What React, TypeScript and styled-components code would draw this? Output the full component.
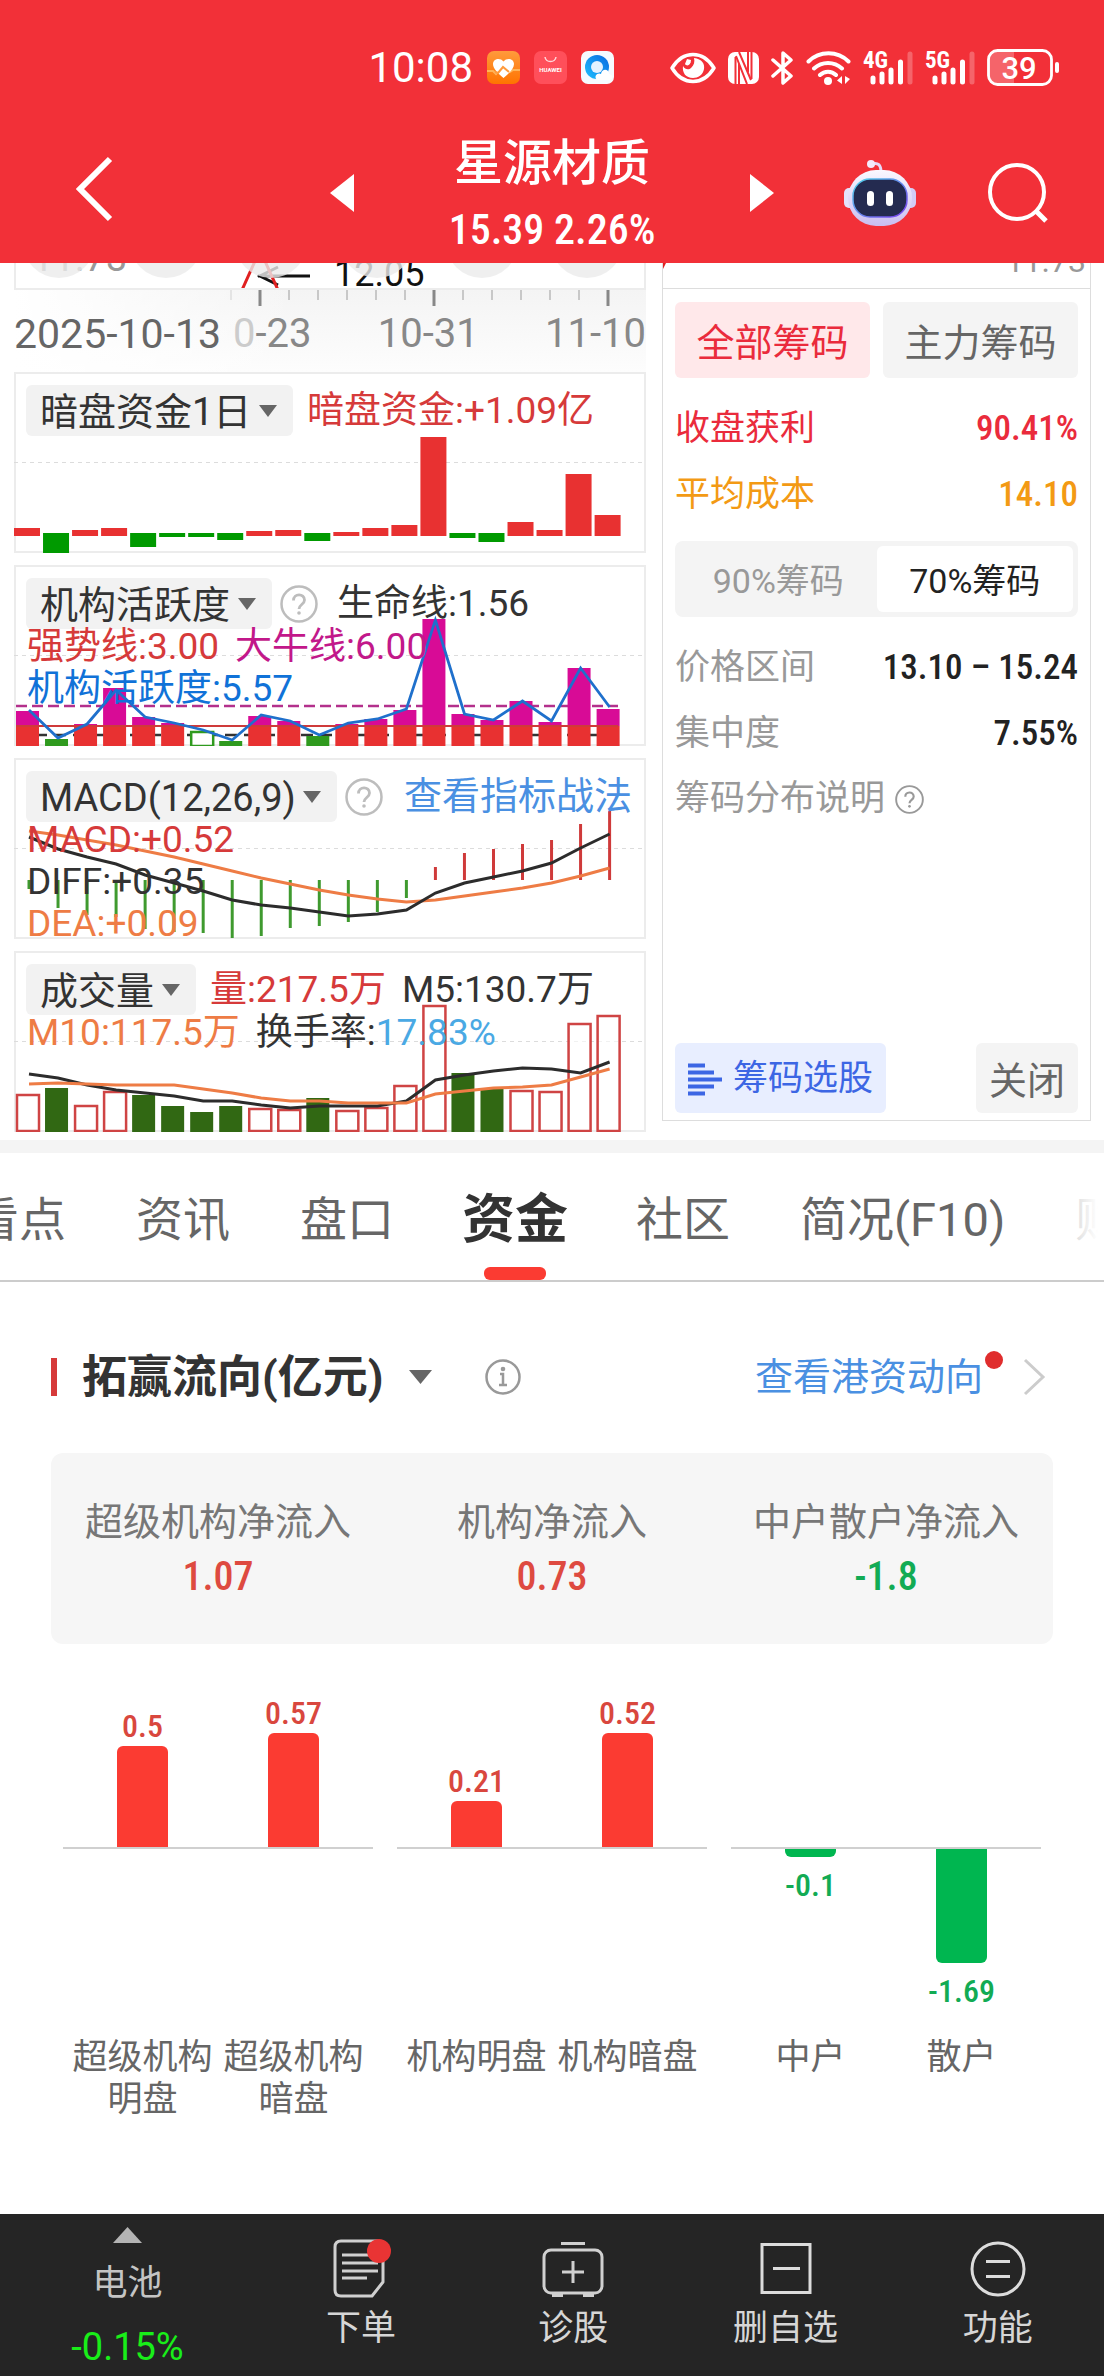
import React, { useState } from "react";
import styled, { createGlobalStyle, css } from "styled-components";

const sans = `Roboto, "Noto Sans CJK SC", sans-serif`;
const condensed = `"Roboto Condensed", Roboto, "Noto Sans CJK SC", sans-serif`;

const color = {
  brand: "#f23038",
  rise: "#fb3b32",
  fall: "#00b650",
  red: "#d63a3a",
  ink: "#333333",
  text: "#666666",
  muted: "#999999",
  link: "#4a90e2",
  line: "#cccccc",
  frame: "#ececec",
  soft: "#f4f4f4",
};

const GlobalStyle = createGlobalStyle`
  *, *::before, *::after { box-sizing: border-box; }
  body {
    margin: 0;
    background: #fff;
    color: ${color.ink};
    font-family: ${sans};
    font-size: 38px;
  }
  button, select {
    margin: 0;
    padding: 0;
    border: 0;
    background: none;
    color: inherit;
    font: inherit;
    appearance: none;
    white-space: nowrap;
  }
  a { color: inherit; text-decoration: none; }
  svg { display: block; flex: none; }
`;

const Page = styled.div`
  display: flex;
  flex-direction: column;
  min-height: 100vh;
  overflow: hidden;
`;

/* ---------- header ---------- */

const Header = styled.header`
  background: ${color.brand};
  color: #fff;
  padding: 49px 0 9px;
`;

const StatusBar = styled.div`
  display: flex;
  align-items: center;
  justify-content: flex-end;
  gap: 56px;
  height: 37px;
  padding-right: 44px;
`;

const StatusGroup = styled.div<{ $gap: number }>`
  display: flex;
  align-items: center;
  gap: ${(p) => p.$gap}px;
`;

const Clock = styled.time`
  font-size: 42px;
  line-height: 37px;
`;

const NavBar = styled.nav`
  display: grid;
  grid-template-columns: 1fr minmax(0, 444px) 1fr;
  align-items: center;
  padding: 0 56px 0 76px;
  margin-top: 46px;
`;

const NavMiddle = styled.div`
  display: flex;
  align-items: center;
  justify-content: space-between;
  margin: 0 10px 0 -10px;
`;

const NavActions = styled.div`
  display: flex;
  align-items: center;
  justify-content: flex-end;
  gap: 71px;
`;

const StockTitle = styled.div`
  text-align: center;
  white-space: nowrap;
`;

const StockName = styled.h1`
  margin: 0;
  font-size: 49px;
  line-height: 64px;
  font-weight: 500;
`;

const StockPrice = styled.div`
  margin-top: 10px;
  font-family: ${condensed};
  font-size: 42px;
  line-height: 48px;
  font-weight: 500;
`;

/* ---------- market area ---------- */

const Market = styled.section`
  display: grid;
  grid-template-columns: minmax(0, 632fr) minmax(0, 429fr);
  column-gap: 16px;
  padding: 0 13px 8px 14px;
`;

const ChartColumn = styled.div`
  display: flex;
  flex-direction: column;
`;

const PriceTail = styled.div`
  height: 27px;
  border: solid ${color.frame};
  border-width: 0 2px 2px;
  overflow: hidden;
`;

const DateAxis = styled.div`
  height: 82px;
  background: linear-gradient(90deg, #fff, rgba(255, 255, 255, 0) 45%),
    linear-gradient(180deg, #f4f4f4, #fdfdfd);
`;

const Ticks = styled.svg`
  width: 100%;
  height: 17px;
`;

const Dates = styled.div`
  display: flex;
  justify-content: space-between;
  margin-top: 6px;
  font-size: 40px;
  line-height: 42px;
  color: #888;
  white-space: nowrap;
`;

const DatePair = styled.span`
  display: flex;
  gap: 12px;
`;

const FirstDate = styled.span`
  font-size: 41px;
  color: ${color.text};
`;

const Faded = styled.span`
  color: #ccc;
`;

const Panel = styled.section`
  position: relative;
  height: 181px;
  border: 2px solid ${color.frame};
  padding: 11px 0 0 10px;
  & + & {
    margin-top: 12px;
  }
`;

const PanelChart = styled.svg`
  position: absolute;
  inset: -2px;
  width: calc(100% + 4px);
  height: 181px;
`;

const PanelText = styled.div`
  position: relative;
`;

const PanelHead = styled.div`
  display: flex;
  align-items: center;
  height: 51px;
  white-space: nowrap;
`;

const Legend = styled.span<{ $color?: string }>`
  color: ${(p) => p.$color || color.ink};
`;

const LegendLine = styled.div`
  display: flex;
  gap: 16px;
  height: 42px;
  line-height: 42px;
  font-size: 37px;
  padding-left: 1px;
  white-space: nowrap;
`;

const LegendRows = styled.div`
  margin-top: -3px;
`;

const HeadLegends = styled.div`
  display: flex;
  gap: 16px;
  margin-left: 14px;
  font-size: 37px;
  line-height: 51px;
`;

const Picker = styled.label`
  display: flex;
  align-items: center;
  gap: 7px;
  height: 51px;
  padding: 0 16px 0 14px;
  border-radius: 6px;
  background: #f2f2f2;
  color: ${color.ink};
  select {
    line-height: 48px;
    height: 51px;
    padding-top: 3px;
  }
`;

const HelpButton = styled.button`
  display: flex;
  margin: 0 5px 0 8px;
`;

const IndicatorLink = styled.a`
  margin-left: 16px;
  line-height: 51px;
  color: ${color.link};
`;

/* ---------- chip distribution ---------- */

const ChipColumn = styled.aside`
  display: flex;
  flex-direction: column;
  margin-bottom: 11px;
  border: 1px solid #dddddd;
  border-top: 0;
`;

const ChipTail = styled.div`
  display: flex;
  justify-content: space-between;
  align-items: flex-end;
  height: 26px;
  padding-right: 4px;
  overflow: hidden;
  border-bottom: 1px solid #dddddd;
  color: ${color.muted};
  font-size: 32px;
  line-height: 34px;
`;

const ChipTailValue = styled.span`
  margin-bottom: 10px;
`;

const ChipBody = styled.div`
  display: flex;
  flex: 1;
  flex-direction: column;
  padding: 13px 12px 7px;
`;

const ChipTabs = styled.div`
  display: grid;
  grid-template-columns: 1fr 1fr;
  gap: 13px;
`;

const ChipTab = styled.button<{ $on: boolean }>`
  height: 76px;
  padding-bottom: 2px;
  border-radius: 6px;
  background: ${(p) => (p.$on ? "#ffe8ea" : color.soft)};
  color: ${(p) => (p.$on ? "#ea2b3c" : color.text)};
`;

const Facts = styled.dl`
  margin: 16px 0 0;
`;

const Fact = styled.div<{ $color?: string }>`
  display: flex;
  align-items: center;
  justify-content: space-between;
  height: 66px;
  padding-top: 3px;
  font-size: 35px;
  line-height: 48px;
  color: ${(p) => p.$color || color.muted};
  white-space: nowrap;
  dt, dd { margin: 0; }
  dd {
    font-family: ${condensed};
    font-weight: 500;
    color: ${(p) => p.$color || "#222"};
  }
`;

const Segment = styled.div`
  display: grid;
  grid-template-columns: 1fr 1fr;
  margin-top: 15px;
  padding: 5px;
  border-radius: 8px;
  background: ${color.soft};
`;

const SegmentItem = styled.button<{ $on: boolean }>`
  height: 66px;
  padding-bottom: 2px;
  border-radius: 6px;
  font-size: 34px;
  background: ${(p) => (p.$on ? "#fff" : "transparent")};
  color: ${(p) => (p.$on ? "#222" : color.muted)};
`;

const Explain = styled.button`
  display: flex;
  align-items: center;
  gap: 10px;
  height: 66px;
  padding-top: 2px;
  font-size: 35px;
  line-height: 48px;
  color: ${color.muted};
`;

const ChipFooter = styled.div`
  display: flex;
  justify-content: space-between;
  margin-top: auto;
`;

const PickStocks = styled.button`
  display: flex;
  align-items: center;
  gap: 11px;
  height: 70px;
  padding: 2px 13px 0;
  border-radius: 6px;
  background: #e8eeff;
  color: #3c66e4;
  font-size: 35px;
  line-height: 48px;
`;

const CloseButton = styled.button`
  height: 70px;
  padding: 0 13px 2px;
  border-radius: 6px;
  background: ${color.soft};
  color: ${color.text};
`;

/* ---------- tabs ---------- */

const TabBar = styled.div`
  position: relative;
  border-top: 13px solid ${color.soft};
  border-bottom: 2px solid ${color.line};
  overflow: hidden;
  &::after {
    content: "";
    position: absolute;
    inset: 0 0 0 auto;
    width: 60px;
    background: linear-gradient(90deg, rgba(255, 255, 255, 0.5), #fff 90%);
  }
`;

const TabStrip = styled.div`
  display: flex;
  margin-left: -63px;
`;

const Tab = styled.button<{ $on: boolean }>`
  position: relative;
  flex: none;
  height: 127px;
  padding: 0 ${(p) => (p.$on ? 33 : 35)}px 3px;
  font-size: ${(p) => (p.$on ? 53 : 47)}px;
  font-weight: ${(p) => (p.$on ? 700 : 400)};
  color: ${(p) => (p.$on ? color.ink : color.text)};
  ${(p) =>
    p.$on &&
    css`
      &::after {
        content: "";
        position: absolute;
        left: calc(50% - 31px);
        bottom: 0;
        width: 62px;
        height: 13px;
        border-radius: 6px;
        background: ${color.rise};
      }
    `}
`;

/* ---------- fund flow ---------- */

const Flow = styled.main`
  flex: 1;
  padding: 62px 51px 0;
`;

const FlowHead = styled.div`
  display: flex;
  align-items: center;
  height: 66px;
`;

const Marker = styled.span`
  width: 6px;
  height: 38px;
  background: ${color.red};
`;

const FlowPicker = styled.label`
  display: flex;
  align-items: center;
  gap: 25px;
  margin-left: 25px;
  select {
    height: 66px;
    font-size: 45px;
    font-weight: 700;
  }
`;

const InfoButton = styled.button`
  display: flex;
  margin-left: 52px;
`;

const FlowLink = styled.a`
  display: flex;
  align-items: center;
  gap: 39px;
  margin: 0 7px 0 auto;
  line-height: 48px;
  color: ${color.link};
`;

const LinkText = styled.span`
  position: relative;
  white-space: nowrap;
  &::after {
    content: "";
    position: absolute;
    right: -20px;
    top: -2px;
    width: 18px;
    height: 18px;
    border-radius: 50%;
    background: #e02d2d;
  }
`;

const Summary = styled.dl`
  display: grid;
  grid-template-columns: repeat(3, 1fr);
  margin: 43px 0 0;
  padding: 41px 0;
  border-radius: 12px;
  background: #f6f6f6;
  text-align: center;
  white-space: nowrap;
`;

const SummaryLabel = styled.dt`
  line-height: 56px;
  color: #777;
`;

const SummaryValue = styled.dd<{ $down: boolean }>`
  margin: 0;
  font-family: ${condensed};
  font-size: 40px;
  line-height: 53px;
  font-weight: 500;
  color: ${(p) => (p.$down ? "#12ab54" : "#de4a40")};
`;

const FlowChart = styled.div`
  display: grid;
  grid-template-columns: repeat(3, 1fr);
  gap: 24px;
  padding: 49px 12px 90px;
`;

const FlowGroup = styled.div`
  display: grid;
  grid-template-columns: 1fr 1fr;
  padding: 0 4px;
  background: linear-gradient(#d0d0d0, #d0d0d0) 0 154px / 100% 2px no-repeat;
`;

const FlowItem = styled.div`
  display: flex;
  flex-direction: column;
  align-items: center;
`;

const Above = styled.div`
  display: flex;
  flex-direction: column;
  align-items: center;
  justify-content: flex-end;
  height: 156px;
  padding-bottom: 2px;
`;

const Below = styled.div`
  display: flex;
  flex-direction: column;
  align-items: center;
  height: 188px;
`;

const Bar = styled.div<{ $down: boolean }>`
  width: 51px;
  border-radius: ${(p) => (p.$down ? "0 0 6px 6px" : "6px 6px 0 0")};
  background: ${(p) => (p.$down ? color.fall : color.rise)};
`;

const BarValue = styled.span<{ $down: boolean }>`
  font-family: ${condensed};
  font-size: 32px;
  font-weight: 500;
  line-height: 40px;
  margin-top: ${(p) => (p.$down ? 8 : 0)}px;
  color: ${(p) => (p.$down ? "#12ab54" : "#d9473e")};
`;

const BarLabel = styled.span`
  width: 144px;
  font-size: 35px;
  line-height: 42px;
  text-align: center;
  color: ${color.text};
`;

/* ---------- bottom bar ---------- */

const BottomBar = styled.nav`
  display: flex;
  height: 162px;
  background: #252525;
  color: #d6d6d6;
  font-size: 35px;
`;

const BottomItem = styled.button`
  display: flex;
  flex: 1;
  flex-direction: column;
  align-items: center;
  padding-top: 24px;
  line-height: 46px;
`;

const BottomLabel = styled.span`
  margin-top: 6px;
`;

const Sector = styled.button`
  display: flex;
  flex: 0 0 255px;
  flex-direction: column;
  align-items: center;
  padding-top: 13px;
  color: #c4c4c4;
`;

const SectorName = styled.span`
  margin-top: 16px;
  line-height: 50px;
`;

const SectorChange = styled.span`
  margin-top: 16px;
  font-size: 38px;
  line-height: 44px;
  color: #19ee19;
`;

/* ---------- icons ---------- */

const Caret = ({ w = 18, h = 12 }: { w?: number; h?: number }) => (
  <svg width={w} height={h} viewBox="0 0 18 12" preserveAspectRatio="none" aria-hidden="true">
    <path d="M0 0h18L9 12z" fill="#666" />
  </svg>
);

const QuestionIcon = ({ size = 38, tone = "#bdbdbd" }: { size?: number; tone?: string }) => (
  <svg width={size} height={size} viewBox="0 0 38 38" fill="none" stroke={tone} aria-hidden="true">
    <circle cx="19" cy="19" r="17.5" strokeWidth="2.5" />
    <path d="M13.5 15.5c0-7.500 11-7.500 11-.5 0 4.500-5.500 4.500-5.500 9" strokeWidth="2.800" />
    <circle cx="19" cy="28" r="1.800" fill={tone} stroke="none" />
  </svg>
);

const HealthApp = () => (
  <svg width="33" height="33" viewBox="0 0 33 33" aria-hidden="true">
    <defs>
      <linearGradient id="health" x1="0" y1="0" x2="0" y2="1">
        <stop offset="0" stopColor="#ff9a3c" />
        <stop offset="1" stopColor="#ff7300" />
      </linearGradient>
    </defs>
    <rect width="33" height="33" rx="7" fill="url(#health)" />
    <path d="M0 20h6l3 3 8-9 6 7 3-2h7" fill="none" stroke="#ffb458" strokeWidth="2" />
    <path d="M16.500 27C11 22 6 18 6 13c0-5 7-7 10.500-2.500C20 6 27 8 27 13c0 5-5 9-10.500 14z" fill="#fff" />
    <path d="M8 21l3 1 5-6 6 5" fill="none" stroke="#ff9a3c" strokeWidth="2" />
  </svg>
);

const StoreApp = () => (
  <svg width="33" height="33" viewBox="0 0 33 33" aria-hidden="true">
    <rect width="33" height="33" rx="7" fill="#ff4f5a" />
    <path d="M11 6c1 6 10 6 11 0" fill="none" stroke="#ffd5d8" strokeWidth="1.500" />
    <text x="16.500" y="21" textAnchor="middle" fontSize="6" fontWeight="700" fill="#fff">HUAWEI</text>
  </svg>
);

const BrowserApp = () => (
  <svg width="33" height="33" viewBox="0 0 33 33" aria-hidden="true">
    <defs>
      <linearGradient id="browser" x1="0" y1="1" x2="1" y2="0">
        <stop offset="0" stopColor="#1fc0ff" />
        <stop offset="1" stopColor="#0a68e0" />
      </linearGradient>
    </defs>
    <rect width="33" height="33" rx="7" fill="#f6faff" />
    <circle cx="16" cy="16" r="12" fill="url(#browser)" />
    <circle cx="16" cy="16" r="6" fill="#e6f2ff" />
    <path d="M16 29c-4-4 1-8 4-6 1-6 8-5 8 0 5 1 4 6 0 6z" fill="#fff" />
  </svg>
);

const EyeIcon = () => (
  <svg width="46" height="32" viewBox="0 0 46 32" aria-hidden="true">
    <path d="M2 16C13-2 33-2 44 16 33 34 13 34 2 16z" fill="none" stroke="#fff" strokeWidth="3.500" strokeLinejoin="round" />
    <path d="M24 6c8 1 11 6 10 11-1 6-6 9-11 9-7 0-11-5-10-12 2 4 6 4 8 2 3-3 4-6 3-10z" fill="#fff" />
    <path d="M15 12c2 3 6 1 6-4l-4-1z" fill="#fff" />
  </svg>
);

const NfcIcon = () => (
  <svg width="31" height="32" viewBox="0 0 31 32" aria-hidden="true">
    <rect width="31" height="32" rx="7" fill="#fff" />
    <path d="M7.500 32V5M23.500 0v27" fill="none" stroke={color.brand} strokeWidth="2" />
    <path d="M11 12v20M20 0v20M11 0l12 28M8 4l11 28" fill="none" stroke={color.brand} strokeWidth="2" />
  </svg>
);

const BluetoothIcon = () => (
  <svg width="23" height="34" viewBox="0 0 23 34" fill="none" stroke="#fff" strokeWidth="3.500" strokeLinejoin="round" strokeLinecap="round" aria-hidden="true">
    <path d="M2 9l18 16-8 7V2l8 7L2 25" />
  </svg>
);

const WifiIcon = () => (
  <svg width="45" height="34" viewBox="0 0 45 34" fill="none" stroke="#fff" strokeWidth="4" strokeLinecap="round" aria-hidden="true">
    <path d="M2.500 10.500c11-11 29-11 40 0M8 17.500c8-7.500 20-7.500 28 0M14 24c4.500-4.500 11.500-4.500 16 0" />
    <circle cx="22" cy="30" r="4" fill="#fff" stroke="none" />
    <path d="M36 25v8l-5-3.500zM39 33v-8l5 3z" fill="#fff" stroke="none" />
  </svg>
);

const SignalText = styled.text`
  font-family: ${condensed};
  font-size: 23px;
  font-weight: 700;
  fill: #fff;
`;

const SignalIcon = ({ label }: { label: string }) => (
  <svg width="50" height="34" viewBox="0 0 50 34" aria-hidden="true">
    <SignalText x="0" y="17">{label}</SignalText>
    <g stroke="#fff" strokeWidth="5" strokeLinecap="round">
      <path d="M10 27v4M19 23v8M28 19v12M37.500 11v20" />
      <path d="M47 3v28" opacity="0.25" />
    </g>
  </svg>
);

const BatteryIcon = () => (
  <svg width="73" height="37" viewBox="0 0 73 37" aria-hidden="true">
    <path d="M8 2h19v33H8a6 6 0 0 1-6-6V8a6 6 0 0 1 6-6z" fill="#fff" opacity="0.25" />
    <rect x="1.500" y="1.500" width="63" height="34" rx="9" fill="none" stroke="#fff" strokeWidth="2.800" />
    <rect x="68" y="13" width="4" height="11" rx="2" fill="#fff" />
    <text x="32" y="29.500" textAnchor="middle" fontSize="31" fontWeight="500" fill="#fff">39</text>
  </svg>
);

const RobotIcon = () => (
  <svg width="74" height="68" viewBox="0 0 74 68" aria-hidden="true">
    <defs>
      <linearGradient id="shell" x1="0" y1="0" x2="0" y2="1">
        <stop offset="0" stopColor="#fbf8ff" />
        <stop offset="1" stopColor="#c9bdf0" />
      </linearGradient>
      <linearGradient id="rim" x1="0" y1="0" x2="1" y2="1">
        <stop offset="0" stopColor="#52d5ea" />
        <stop offset="1" stopColor="#7a3cf0" />
      </linearGradient>
    </defs>
    <path d="M29 5c6-2 9 1 9 8" fill="none" stroke="#e6d9f8" strokeWidth="3" />
    <circle cx="28" cy="5" r="4" fill="#f4e9fb" />
    <rect x="1" y="29" width="12" height="20" rx="5" fill="#e4e2fb" />
    <rect x="61" y="29" width="12" height="20" rx="5" fill="#d3ccf6" />
    <rect x="5" y="11" width="64" height="56" rx="28" fill="url(#shell)" />
    <rect x="10" y="20" width="54" height="38" rx="17" fill="#242b50" stroke="url(#rim)" strokeWidth="1.500" />
    <rect x="24" y="32" width="7" height="15" rx="3.500" fill="#fff" />
    <rect x="43" y="32" width="7" height="15" rx="3.500" fill="#fff" />
  </svg>
);

/* ---------- chart data ---------- */

const STEP = 29.03;
const left = (i: number) => 2 + STEP * i;
const mid = (i: number) => 15 + STEP * i;
const line = (ys: number[]) => ys.map((y, i) => `${mid(i).toFixed(1)},${y}`).join(" ");

const darkFlow = [8, -20, 6, 8, -14, -4, -4, -7, 5, 6, -8, 4, 8, 11, 99, -5, -9, 14, 6, 62, 21];

const activityBars = [146, 174, 159, 123, 152, 158, 166, 176, 151, 156, 171, 159, 154, 145, 54, 149, 155, 136, 157, 103, 144];
const activityLine = [145, 173, 159, 125, 152, 158, 165, 175, 150, 156, 170, 158, 154, 144, 55, 149, 155, 136, 156, 103, 142];
const calmDays = [1, 7, 10];
const hollowDay = 6;

const macdBars = [131, 150, 157, 159, 171, 174, 175, 180, 178, 170, 168, 164, 154, 140, 109, 95, 91, 86, 82, 66, 53];
const diffLine = [79, 91, 99, 106, 117, 125, 133, 142, 147, 150, 154, 158, 156, 152, 135, 125, 119, 113, 105, 90, 76];
const deaLine = [73, 77, 82, 87, 93, 99, 106, 113, 120, 126, 132, 137, 141, 144, 142, 138, 134, 130, 125, 118, 110];

const volumeTops = [143, 137, 154, 140, 144, 155, 161, 155, 157, 158, 147, 159, 156, 134, 54, 122, 138, 139, 140, 72, 64];
const volumeDown = [1, 4, 5, 6, 7, 10, 15, 16];
const ma5 = [123, 127, 134, 139, 142, 145, 150, 150, 154, 157, 155, 155, 155, 150, 129, 124, 120, 117, 118, 122, 111];
const ma10 = [133, 132, 133, 134, 134, 134, 138, 142, 147, 150, 150, 152, 152, 152, 143, 140, 137, 136, 134, 126, 118];

const Frame = ({ children }: { children: React.ReactNode }) => (
  <PanelChart viewBox="0 0 632 181" preserveAspectRatio="none" aria-hidden="true">
    <path d="M0 90.500h632" stroke="#dcdcdc" strokeWidth="1" strokeDasharray="4 4" />
    {children}
  </PanelChart>
);

const DarkFlowChart = () => (
  <Frame>
    {darkFlow.map((v, i) => (
      <rect key={i} x={STEP * i} y={v > 0 ? 164 - v : 161} width="26" height={Math.abs(v)} fill={v > 0 ? "#e83131" : "#009a00"} />
    ))}
  </Frame>
);

const ActivityChart = () => (
  <Frame>
    <path d="M2 170h600" stroke="#333" strokeWidth="2.500" strokeDasharray="12 7" />
    <path d="M2 141h602" stroke="#b3308c" strokeWidth="2.500" strokeDasharray="11 5" />
    {activityBars.map((top, i) => {
      if (i === hollowDay)
        return <rect key={i} x={left(i) + 1} y={top + 1} width="22" height="14" fill="#fff" stroke="#2f9a1e" strokeWidth="2.500" />;
      if (calmDays.includes(i)) return <rect key={i} x={left(i)} y={top} width="23" height={181 - top} fill="#2f9a1e" />;
      return (
        <g key={i}>
          <rect x={left(i)} y={top} width="23" height={161 - top} fill="#d80b96" />
          <rect x={left(i)} y="161" width="23" height="20" fill="#e83131" />
        </g>
      );
    })}
    <path d="M2 161h602" stroke="#cf3a3a" strokeWidth="2" />
    <polyline points={line(activityLine)} fill="none" stroke="#1f70cc" strokeWidth="2.800" />
  </Frame>
);

const MacdChart = () => (
  <Frame>
    {macdBars.map((y, i) => (
      <path key={i} d={`M${mid(i)} 122V${y}`} stroke={y > 122 ? "#3f9a2f" : "#cf3a3a"} strokeWidth="3" />
    ))}
    <polyline points={line(deaLine)} fill="none" stroke="#ee7c45" strokeWidth="3" />
    <polyline points={line(diffLine)} fill="none" stroke="#2c2c2c" strokeWidth="3" />
  </Frame>
);

const VolumeChart = () => (
  <Frame>
    {volumeTops.map((top, i) =>
      volumeDown.includes(i) ? (
        <rect key={i} x={left(i)} y={top} width="23" height={181 - top} fill="#316813" />
      ) : (
        <rect key={i} x={left(i) + 1} y={top + 1} width="22" height={179 - top} fill="#fff" fillOpacity="0.6" stroke="#cf4444" strokeWidth="2.500" />
      )
    )}
    <polyline points={line(ma5)} fill="none" stroke="#2c2c2c" strokeWidth="3" />
    <polyline points={line(ma10)} fill="none" stroke="#ee7c45" strokeWidth="3" />
  </Frame>
);

const IndicatorPicker = ({ name }: { name: string }) => (
  <Picker>
    <select aria-label="指标" defaultValue={name}>
      <option>{name}</option>
    </select>
    <Caret />
  </Picker>
);

const Help = () => (
  <HelpButton type="button" aria-label="指标说明">
    <QuestionIcon />
  </HelpButton>
);

const tabs = ["看点", "资讯", "盘口", "资金", "社区", "简况(F10)", "财务"];

const summary = [
  { label: "超级机构净流入", value: "1.07" },
  { label: "机构净流入", value: "0.73" },
  { label: "中户散户净流入", value: "-1.8" },
];

const groups = [
  [
    { label: "超级机构明盘", value: "0.5", size: 101 },
    { label: "超级机构暗盘", value: "0.57", size: 114 },
  ],
  [
    { label: "机构明盘", value: "0.21", size: 46 },
    { label: "机构暗盘", value: "0.52", size: 114 },
  ],
  [
    { label: "中户", value: "-0.1", size: 8 },
    { label: "散户", value: "-1.69", size: 114 },
  ],
];

export default function App() {
  const [tab, setTab] = useState("资金");
  const [chips, setChips] = useState("全部筹码");
  const [range, setRange] = useState("70%筹码");

  return (
    <Page>
      <GlobalStyle />
      <Header>
        <StatusBar>
          <StatusGroup $gap={14}>
            <Clock>10:08</Clock>
            <HealthApp />
            <StoreApp />
            <BrowserApp />
          </StatusGroup>
          <StatusGroup $gap={12}>
            <EyeIcon />
            <NfcIcon />
            <BluetoothIcon />
            <WifiIcon />
            <SignalIcon label="4G" />
            <SignalIcon label="5G" />
            <BatteryIcon />
          </StatusGroup>
        </StatusBar>
        <NavBar>
          <div>
            <button type="button" aria-label="返回">
              <svg width="38" height="66" viewBox="0 0 38 66" fill="none" stroke="#fff" strokeWidth="6">
                <path d="M34 3L4 33l30 30" />
              </svg>
            </button>
          </div>
          <NavMiddle>
            <button type="button" aria-label="上一只">
              <svg width="24" height="38" viewBox="0 0 24 38"><path d="M24 0v38L0 19z" fill="#fff" /></svg>
            </button>
            <StockTitle>
              <StockName>星源材质</StockName>
              <StockPrice>15.39 2.26%</StockPrice>
            </StockTitle>
            <button type="button" aria-label="下一只">
              <svg width="24" height="38" viewBox="0 0 24 38"><path d="M0 0v38l24-19z" fill="#fff" /></svg>
            </button>
          </NavMiddle>
          <NavActions>
            <button type="button" aria-label="智能助手"><RobotIcon /></button>
            <button type="button" aria-label="搜索">
              <svg width="60" height="60" viewBox="0 0 60 60" fill="none" stroke="#fff" strokeWidth="4">
                <circle cx="29" cy="29" r="27" />
                <path d="M48 48l10 10" strokeWidth="5" />
              </svg>
            </button>
          </NavActions>
        </NavBar>
      </Header>

      <Market>
        <ChartColumn>
          <PriceTail>
            <svg width="100%" viewBox="0 0 628 25" aria-hidden="true">
              <text x="16" y="8" fontSize="38" fill="#999">11.73</text>
              <text x="318" y="23" fontSize="36" fill="#111">12.05</text>
              <path d="M242 13h52M262 4l-18 9 18 9" fill="none" stroke="#111" strokeWidth="3" />
              <path d="M226 27l18-40 18 40" fill="none" stroke="#e02020" strokeWidth="3" />
              <g fill="#ececec" opacity="0.8">
                {[43, 150, 255, 361, 466, 571].map((x) => (
                  <circle key={x} cx={x} cy="-21" r="36" />
                ))}
              </g>
            </svg>
          </PriceTail>
          <DateAxis>
            <Ticks viewBox="0 0 632 17" preserveAspectRatio="none" aria-hidden="true">
              {Array.from({ length: 14 }, (_, k) => (
                <path
                  key={k}
                  d={`M${217 + 29 * k} 0v${k % 6 === 1 ? 16 : 10}`}
                  stroke={k === 0 ? "#e4e4e4" : k % 6 === 1 ? "#888" : "#c8c8c8"}
                  strokeWidth={k % 6 === 1 ? 3 : 2}
                />
              ))}
            </Ticks>
            <Dates>
              <DatePair>
                <FirstDate>2025-10-13</FirstDate>
                <span><Faded>0</Faded>-23</span>
              </DatePair>
              <span>10-31</span>
              <span>11-10</span>
            </Dates>
          </DateAxis>

          <Panel>
            <DarkFlowChart />
            <PanelText>
              <PanelHead>
                <IndicatorPicker name="暗盘资金1日" />
                <HeadLegends>
                  <Legend $color={color.red}>暗盘资金:+1.09亿</Legend>
                </HeadLegends>
              </PanelHead>
            </PanelText>
          </Panel>

          <Panel>
            <ActivityChart />
            <PanelText>
              <PanelHead>
                <IndicatorPicker name="机构活跃度" />
                <Help />
                <HeadLegends>
                  <Legend>生命线:1.56</Legend>
                </HeadLegends>
              </PanelHead>
              <LegendRows>
                <LegendLine>
                  <Legend $color={color.red}>强势线:3.00</Legend>
                  <Legend $color="#c2188a">大牛线:6.00</Legend>
                </LegendLine>
                <LegendLine>
                  <Legend $color="#1072d8">机构活跃度:5.57</Legend>
                </LegendLine>
              </LegendRows>
            </PanelText>
          </Panel>

          <Panel>
            <MacdChart />
            <PanelText>
              <PanelHead>
                <IndicatorPicker name="MACD(12,26,9)" />
                <Help />
                <IndicatorLink href="#guide">查看指标战法</IndicatorLink>
              </PanelHead>
              <LegendRows>
                <LegendLine><Legend $color={color.red}>MACD:+0.52</Legend></LegendLine>
                <LegendLine><Legend>DIFF:+0.35</Legend></LegendLine>
                <LegendLine><Legend $color="#ee7c45">DEA:+0.09</Legend></LegendLine>
              </LegendRows>
            </PanelText>
          </Panel>

          <Panel>
            <VolumeChart />
            <PanelText>
              <PanelHead>
                <IndicatorPicker name="成交量" />
                <HeadLegends>
                  <Legend $color={color.red}>量:217.5万</Legend>
                  <Legend>M5:130.7万</Legend>
                </HeadLegends>
              </PanelHead>
              <LegendRows>
                <LegendLine>
                  <Legend $color="#ee7c45">M10:117.5万</Legend>
                  <Legend>换手率:<Legend $color="#4aa9e4">17.83%</Legend></Legend>
                </LegendLine>
              </LegendRows>
            </PanelText>
          </Panel>
        </ChartColumn>

        <ChipColumn>
          <ChipTail>
            <svg width="4" height="25" viewBox="0 0 4 25" aria-hidden="true"><path d="M0 0h3L0 6z" fill="#e02020" /></svg>
            <ChipTailValue>11.73</ChipTailValue>
          </ChipTail>
          <ChipBody>
            <ChipTabs>
              {["全部筹码", "主力筹码"].map((name) => (
                <ChipTab key={name} type="button" $on={chips === name} aria-pressed={chips === name} onClick={() => setChips(name)}>
                  {name}
                </ChipTab>
              ))}
            </ChipTabs>
            <Facts>
              <Fact $color="#ea2b3c"><dt>收盘获利</dt><dd>90.41%</dd></Fact>
              <Fact $color="#f39a14"><dt>平均成本</dt><dd>14.10</dd></Fact>
            </Facts>
            <Segment>
              {["90%筹码", "70%筹码"].map((name) => (
                <SegmentItem key={name} type="button" $on={range === name} aria-pressed={range === name} onClick={() => setRange(name)}>
                  {name}
                </SegmentItem>
              ))}
            </Segment>
            <Facts>
              <Fact><dt>价格区间</dt><dd>13.10 – 15.24</dd></Fact>
              <Fact><dt>集中度</dt><dd>7.55%</dd></Fact>
            </Facts>
            <Explain type="button">
              筹码分布说明
              <QuestionIcon size={29} tone="#999" />
            </Explain>
            <ChipFooter>
              <PickStocks type="button">
                <svg width="34" height="33" viewBox="0 0 34 33" stroke="#3c66e4" strokeWidth="4" aria-hidden="true">
                  <path d="M0 2.500h17M0 9.500h26M0 16.500h34M0 23.500h26M0 30.500h17" />
                </svg>
                筹码选股
              </PickStocks>
              <CloseButton type="button">关闭</CloseButton>
            </ChipFooter>
          </ChipBody>
        </ChipColumn>
      </Market>

      <TabBar>
        <TabStrip role="tablist">
          {tabs.map((name) => (
            <Tab key={name} type="button" role="tab" aria-selected={tab === name} $on={tab === name} onClick={() => setTab(name)}>
              {name}
            </Tab>
          ))}
        </TabStrip>
      </TabBar>

      <Flow>
        <FlowHead>
          <Marker />
          <FlowPicker>
            <select aria-label="资金流向" defaultValue="拓赢流向(亿元)">
              <option>拓赢流向(亿元)</option>
            </select>
            <Caret w={23} h={14} />
          </FlowPicker>
          <InfoButton type="button" aria-label="说明">
            <svg width="38" height="38" viewBox="0 0 38 38" fill="none" stroke="#999" strokeWidth="2.500">
              <circle cx="19" cy="19" r="16.500" />
              <path d="M16 16h3v11M15 27h8" />
              <circle cx="19" cy="11" r="2.300" fill="#999" stroke="none" />
            </svg>
          </InfoButton>
          <FlowLink href="#hk">
            <LinkText>查看港资动向</LinkText>
            <svg width="24" height="38" viewBox="0 0 24 38" fill="none" stroke="#ccc" strokeWidth="3" aria-hidden="true">
              <path d="M3 2l18 17L3 36" />
            </svg>
          </FlowLink>
        </FlowHead>

        <Summary>
          {summary.map((s) => (
            <div key={s.label}>
              <SummaryLabel>{s.label}</SummaryLabel>
              <SummaryValue $down={s.value.startsWith("-")}>{s.value}</SummaryValue>
            </div>
          ))}
        </Summary>

        <FlowChart>
          {groups.map((group, g) => (
            <FlowGroup key={g}>
              {group.map((item) => {
                const down = item.value.startsWith("-");
                return (
                  <FlowItem key={item.label}>
                    <Above>
                      {!down && <BarValue $down={false}>{item.value}</BarValue>}
                      {!down && <Bar $down={false} style={{ height: item.size }} />}
                    </Above>
                    <Below>
                      {down && <Bar $down style={{ height: item.size }} />}
                      {down && <BarValue $down>{item.value}</BarValue>}
                    </Below>
                    <BarLabel>{item.label}</BarLabel>
                  </FlowItem>
                );
              })}
            </FlowGroup>
          ))}
        </FlowChart>
      </Flow>

      <BottomBar>
        <Sector type="button">
          <svg width="29" height="16" viewBox="0 0 29 16" aria-hidden="true"><path d="M14.500 0L29 16H0z" fill="#b4b4b4" /></svg>
          <SectorName>电池</SectorName>
          <SectorChange>-0.15%</SectorChange>
        </Sector>
        <BottomItem type="button">
          <svg width="60" height="62" viewBox="0 0 60 62" fill="none" stroke="#d0d0d0" strokeWidth="3" aria-hidden="true">
            <path d="M10 3h36q6 0 6 6v35L41 58H10q-6 0-6-6V9q0-6 6-6z" strokeLinejoin="round" />
            <path d="M11 17h28M11 25h36M11 33h36M11 40h25" />
            <circle cx="48" cy="13" r="12" fill="#e93434" stroke="none" />
          </svg>
          <BottomLabel>下单</BottomLabel>
        </BottomItem>
        <BottomItem type="button">
          <svg width="62" height="62" viewBox="0 0 62 62" fill="none" stroke="#d0d0d0" strokeWidth="3" aria-hidden="true">
            <rect x="2" y="12" width="58" height="43" rx="7" />
            <path d="M19 5.500h24M20 34h22M31 23v22M10 57.500h11M41 57.500h11" />
          </svg>
          <BottomLabel>诊股</BottomLabel>
        </BottomItem>
        <BottomItem type="button">
          <svg width="52" height="62" viewBox="0 0 52 62" fill="none" stroke="#dcdcdc" strokeWidth="3" aria-hidden="true">
            <rect x="2" y="6.500" width="48" height="48" />
            <path d="M13 30.500h27" />
          </svg>
          <BottomLabel>删自选</BottomLabel>
        </BottomItem>
        <BottomItem type="button">
          <svg width="56" height="62" viewBox="0 0 56 62" fill="none" stroke="#dcdcdc" strokeWidth="3" aria-hidden="true">
            <circle cx="28" cy="31" r="26" />
            <path d="M16 23.500h24M16 38.500h24" />
          </svg>
          <BottomLabel>功能</BottomLabel>
        </BottomItem>
      </BottomBar>
    </Page>
  );
}
